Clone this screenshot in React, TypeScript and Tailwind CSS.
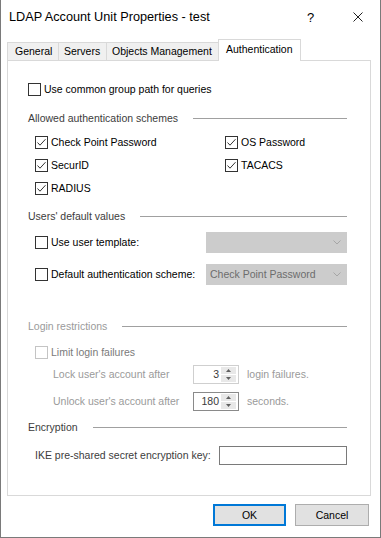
import React from 'react';

// Windows classic "properties" dialog: LDAP Account Unit, Authentication tab.

function CheckBox({
  checked = false,
  disabled = false,
  label,
  textClass = 'text-black',
}: {
  checked?: boolean;
  disabled?: boolean;
  label: string;
  textClass?: string;
}) {
  return (
    <span className="flex items-center">
      <span
        className={
          'flex h-[13px] w-[13px] shrink-0 items-center justify-center border bg-white ' +
          (disabled ? 'border-[#c4c4c4]' : 'border-[#333333]')
        }
      >
        {checked && (
          <svg width="11" height="11" viewBox="0 0 11 11">
            <polyline points="1.5,5.5 4,8.2 9.5,2.2" fill="none" stroke="#333" strokeWidth="1" />
          </svg>
        )}
      </span>
      <span className={'ml-[3px] whitespace-nowrap ' + textClass}>{label}</span>
    </span>
  );
}

function GroupLabel({ text, muted = false }: { text: string; muted?: boolean }) {
  return (
    <div className="flex h-[17px] items-center">
      <span className={'whitespace-nowrap ' + (muted ? 'text-[#9a9a9a]' : 'text-[#3c3c3c]')}>
        {text}
      </span>
      <span className="ml-[15px] h-px flex-1 bg-[#a0a0a0]" />
    </div>
  );
}

function Combo({ text = '' }: { text?: string }) {
  return (
    <div className="flex h-[21px] w-[141px] items-center border border-[#cccccc] bg-[#cccccc] pl-[3px] pr-[5px]">
      <span className="flex-1 whitespace-nowrap text-[#6d6d6d]">{text}</span>
      <svg width="8" height="5" viewBox="0 0 8 5">
        <polyline points="0.5,0.5 4,4 7.5,0.5" fill="none" stroke="#a6a6a6" strokeWidth="1" />
      </svg>
    </div>
  );
}

function SpinBox({ value, strong = false }: { value: string; strong?: boolean }) {
  return (
    <div
      className={
        'flex h-[19px] w-[46px] items-stretch border bg-white p-px ' +
        (strong ? 'border-[#8a8a8a]' : 'border-[#cfcfcf]')
      }
    >
      <span className="flex flex-1 items-center justify-end pr-[2px] text-[#3a3a3a]">{value}</span>
      <span className="mr-[1px] flex w-[15px] flex-col gap-px">
        <span className="flex flex-1 items-center justify-center bg-[#e8e8e8]">
          <svg width="5" height="3" viewBox="0 0 5 3">
            <polygon points="0,3 2.5,0 5,3" fill="#606060" />
          </svg>
        </span>
        <span className="flex flex-1 items-center justify-center bg-[#e8e8e8]">
          <svg width="5" height="3" viewBox="0 0 5 3">
            <polygon points="0,0 2.5,3 5,0" fill="#606060" />
          </svg>
        </span>
      </span>
    </div>
  );
}

export default function App() {
  return (
    <div className="flex h-[538px] w-[381px] flex-col border-x border-b border-[#7a7a7a] bg-white font-['Liberation_Sans',Arial,sans-serif] text-[10.5px] leading-[13px] text-black">
      {/* title bar */}
      <div className="flex h-[34px] items-center pl-[8px] pr-[17px] text-[12.7px]">
        <span className="flex-1 whitespace-nowrap">LDAP Account Unit Properties - test</span>
        <span className="mr-[39px] w-[7px] text-center text-[13px]">?</span>
        <svg width="10" height="10" viewBox="0 0 10 10">
          <path d="M0.5 0.5 L9.5 9.5 M9.5 0.5 L0.5 9.5" stroke="#222" strokeWidth="1" />
        </svg>
      </div>

      {/* tabs */}
      <div className="ml-[6px] flex h-[26px] items-end">
        <div className="flex h-[18px] w-[51px] items-center border-l border-t border-[#d9d9d9] bg-[#f0f0f0] pl-[7px]">
          General
        </div>
        <div className="flex h-[18px] w-[48px] items-center border-l border-t border-[#d9d9d9] bg-[#f0f0f0] pl-[5px]">
          Servers
        </div>
        <div className="flex h-[18px] w-[112px] items-center border-l border-t border-[#d9d9d9] bg-[#f0f0f0] pl-[5px]">
          Objects Management
        </div>
        <div className="relative z-10 -mb-px h-[22px] w-[83px] border-x border-t border-[#d9d9d9] bg-white pl-[7px] pt-[3px]">
          Authentication
        </div>
      </div>

      {/* tab page */}
      <div className="ml-[6px] flex h-[436px] w-[364px] flex-col border border-[#d9d9d9] bg-white pl-[20px] pr-[23px]">
        <div className="mt-[20px] flex h-[17px] items-center">
          <CheckBox label="Use common group path for queries" />
        </div>

        <div className="mt-[12px]">
          <GroupLabel text="Allowed authentication schemes" />
        </div>
        <div className="mt-[7px] flex h-[17px] items-center pl-[7px]">
          <span className="w-[190px]">
            <CheckBox checked label="Check Point Password" />
          </span>
          <CheckBox checked label="OS Password" />
        </div>
        <div className="mt-[6px] flex h-[17px] items-center pl-[7px]">
          <span className="w-[190px]">
            <CheckBox checked label="SecurID" />
          </span>
          <CheckBox checked label="TACACS" />
        </div>
        <div className="mt-[6px] flex h-[17px] items-center pl-[7px]">
          <CheckBox checked label="RADIUS" />
        </div>

        <div className="mt-[11px]">
          <GroupLabel text="Users' default values" />
        </div>
        <div className="mt-[7px] flex h-[21px] items-center pl-[7px]">
          <span className="flex-1">
            <CheckBox label="Use user template:" />
          </span>
          <Combo />
        </div>
        <div className="mt-[11px] flex h-[21px] items-center pl-[7px]">
          <span className="flex-1">
            <CheckBox label="Default authentication scheme:" />
          </span>
          <Combo text="Check Point Password" />
        </div>

        <div className="mt-[33px]">
          <GroupLabel text="Login restrictions" muted />
        </div>
        <div className="mt-[9px] flex h-[17px] items-center pl-[7px]">
          <CheckBox disabled label="Limit login failures" textClass="text-[#7a7a7a]" />
        </div>
        <div className="mt-[4px] flex h-[19px] items-center pl-[25px] text-[#9a9a9a]">
          <span className="w-[140px] whitespace-nowrap">Lock user's account after</span>
          <SpinBox value="3" />
          <span className="ml-[8px] whitespace-nowrap">login failures.</span>
        </div>
        <div className="mt-[8px] flex h-[19px] items-center pl-[25px] text-[#9a9a9a]">
          <span className="w-[140px] whitespace-nowrap">Unlock user's account after</span>
          <SpinBox value="180" strong />
          <span className="ml-[8px] whitespace-nowrap">seconds.</span>
        </div>

        <div className="mt-[8px]">
          <GroupLabel text="Encryption" />
        </div>
        <div className="mt-[10px] flex h-[19px] items-center pl-[7px]">
          <span className="flex-1 whitespace-nowrap text-[#3c3c3c]">IKE pre-shared secret encryption key:</span>
          <div className="h-[19px] w-[128px] border border-[#7a7a7a] bg-white" />
        </div>
      </div>

      {/* buttons */}
      <div className="mt-[8px] flex justify-end gap-[9px] pr-[11px]">
        <button
          type="button"
          className="flex h-[22px] w-[73px] items-center justify-center border border-[#0078d7] bg-[#e1e1e1] shadow-[inset_0_0_0_1px_#0078d7]"
        >
          OK
        </button>
        <button
          type="button"
          className="flex h-[22px] w-[74px] items-center justify-center border border-[#adadad] bg-[#e1e1e1]"
        >
          Cancel
        </button>
      </div>
    </div>
  );
}
